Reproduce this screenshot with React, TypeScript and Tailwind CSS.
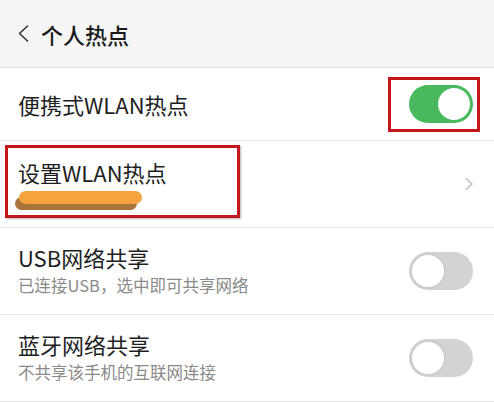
const font = { fontFamily: '"Noto Sans CJK SC", "Noto Sans", sans-serif' };

const Toggle = ({ on }: { on: boolean }) => (
  <div
    className={`flex h-[38px] w-[64px] items-center rounded-full p-[1px] ${
      on ? 'justify-end bg-[#48b95c]' : 'justify-start bg-[#d3d3d3]'
    }`}
  >
    <span
      className={`h-[36px] w-[36px] rounded-full bg-white ${
        on ? 'border-2 border-[#48b95c]' : 'border-2 border-[#cdcdcd]'
      }`}
    />
  </div>
);

interface RowProps {
  title: string;
  subtitle: string;
}

const ShareRow = ({ title, subtitle }: RowProps) => (
  <div className="flex h-[87px] items-center justify-between border-b border-[#e8e8e8] pl-[18px] pr-[21px]">
    <div className="flex flex-col gap-[9px] pb-[2px]">
      <span className="text-[22px] leading-none text-[#1e1e1e]">{title}</span>
      <span className="text-[16.5px] leading-none text-[#8a8a8a]">{subtitle}</span>
    </div>
    <Toggle on={false} />
  </div>
);

export default function App() {
  return (
    <div className="h-[403px] w-[494px] overflow-hidden bg-white" style={font}>
      {/* Header */}
      <div className="flex h-[68px] items-center gap-[12px] border-b border-[#e2e2e2] bg-[#f5f5f5] pl-[18px]">
        <svg width="11" height="17" viewBox="0 0 11 17" fill="none">
          <polyline points="9.5,1 1.5,8.5 9.5,16" stroke="#333" strokeWidth="1.6" strokeLinecap="round" strokeLinejoin="round" />
        </svg>
        <span className="text-[22px] font-medium leading-none text-[#1a1a1a]">个人热点</span>
      </div>

      {/* Portable hotspot */}
      <div className="flex h-[73px] items-center justify-between border-b border-[#e8e8e8] pl-[18px] pr-[21px]">
        <span className="text-[22px] leading-none text-[#1e1e1e]">便携式WLAN热点</span>
        <div className="relative">
          <Toggle on />
          <div className="absolute -top-[8px] -bottom-[9px] -left-[21px] -right-[7px] border-[3px] border-[#c4161c]" />
        </div>
      </div>

      {/* Configure hotspot */}
      <div className="flex h-[87px] items-center justify-between border-b border-[#e8e8e8] pl-[18px] pr-[20px]">
        <div className="relative flex flex-col pt-[2px]">
          <span className="text-[22px] leading-none text-[#1e1e1e]">设置WLAN热点</span>
          <div className="relative mt-[8px] ml-[-3px] h-[19px] w-[127px]">
            <div className="absolute left-0 top-[6px] h-[13px] w-[122px] rounded-full bg-[#a8743a]" />
            <div className="absolute left-[4px] top-0 h-[13px] w-[123px] rounded-full bg-[#f6a33f]" />
          </div>
          <div className="absolute -top-[14px] -bottom-[8px] -left-[13px] w-[235px] border-[3px] border-[#c4161c] shadow-[1px_1px_2px_rgba(0,0,0,0.3)]" />
        </div>
        <svg width="10" height="14" viewBox="0 0 10 14" fill="none">
          <polyline points="2,1.5 8,7 2,12.5" stroke="#bdbdbd" strokeWidth="1.4" strokeLinecap="round" strokeLinejoin="round" />
        </svg>
      </div>

      <ShareRow title="USB网络共享" subtitle="已连接USB，选中即可共享网络" />
      <ShareRow title="蓝牙网络共享" subtitle="不共享该手机的互联网连接" />
    </div>
  );
}
